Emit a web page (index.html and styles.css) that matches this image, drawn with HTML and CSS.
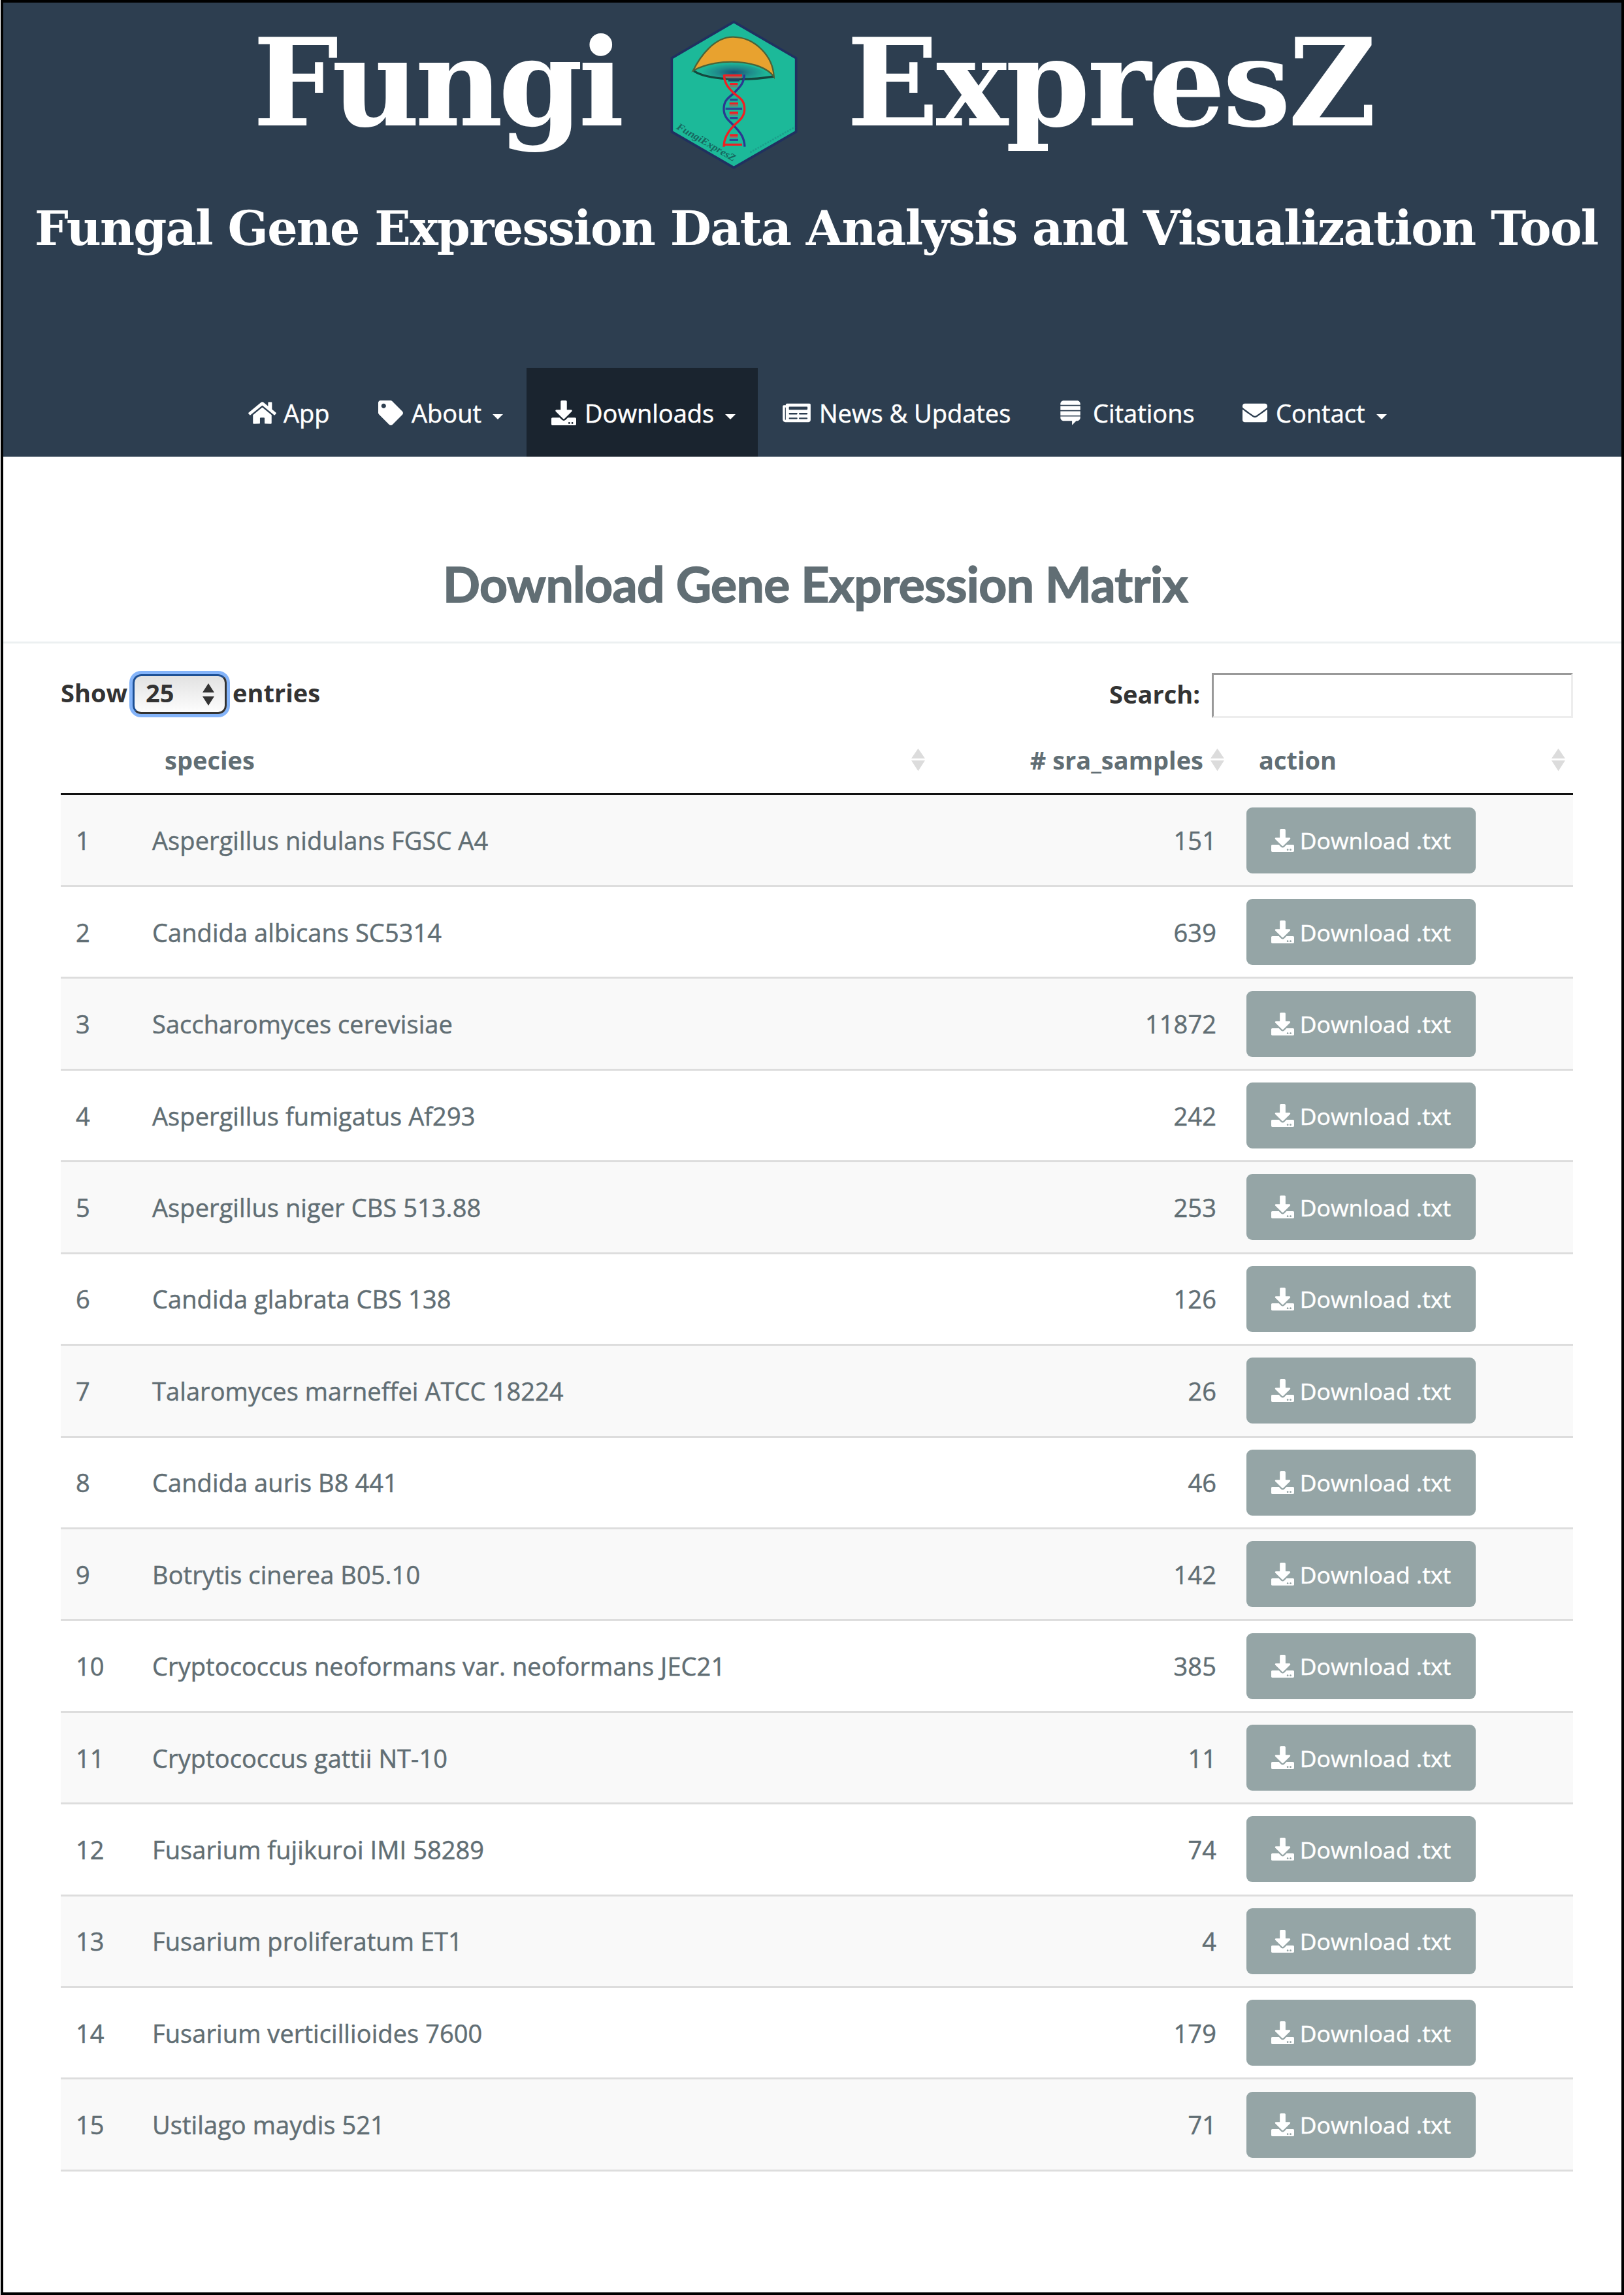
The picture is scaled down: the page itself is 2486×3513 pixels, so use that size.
FILE: index.html
```html
<!DOCTYPE html>
<html lang="en">
<head>
<meta charset="utf-8">
<title>FungiExpresZ</title>
<link rel="stylesheet" href="styles.css">
</head>
<body>
<svg width="0" height="0" class="defs">
  <symbol id="i-home" viewBox="0 0 576 512"><path d="M280.37 148.26L96 300.11V464a16 16 0 0 0 16 16l112.06-.29a16 16 0 0 0 15.92-16V368a16 16 0 0 1 16-16h64a16 16 0 0 1 16 16v95.64a16 16 0 0 0 16 16.05L464 480a16 16 0 0 0 16-16V300L295.67 148.26a12.19 12.19 0 0 0-15.3 0zM571.6 251.47L488 182.56V44.05a12 12 0 0 0-12-12h-56a12 12 0 0 0-12 12v72.61L318.47 43a48 48 0 0 0-61 0L4.34 251.47a12 12 0 0 0-1.6 16.9l25.5 31A12 12 0 0 0 45.15 301l235.22-193.74a12.19 12.19 0 0 1 15.3 0L530.9 301a12 12 0 0 0 16.9-1.6l25.5-31a12 12 0 0 0-1.7-16.93z"/></symbol>
  <symbol id="i-tag" viewBox="0 0 512 512"><path d="M0 252.118V48C0 21.49 21.49 0 48 0h204.118a48 48 0 0 1 33.941 14.059l211.882 211.882c18.745 18.745 18.745 49.137 0 67.882L293.823 497.941c-18.745 18.745-49.137 18.745-67.882 0L14.059 286.059A48 48 0 0 1 0 252.118zM112 64c-26.51 0-48 21.49-48 48s21.490 48 48 48 48-21.490 48-48-21.490-48-48-48z"/></symbol>
  <symbol id="i-download" viewBox="0 0 512 512"><path d="M216 0h80c13.300 0 24 10.700 24 24v168h87.700c17.800 0 26.700 21.500 14.100 34.100L269.700 378.300c-7.500 7.500-19.800 7.500-27.300 0L90.100 226.100c-12.600-12.600-3.700-34.100 14.100-34.100H192V24c0-13.300 10.700-24 24-24zm296 376v112c0 13.300-10.700 24-24 24H24c-13.300 0-24-10.700-24-24V376c0-13.300 10.700-24 24-24h146.700l49 49c20.100 20.100 52.500 20.100 72.600 0l49-49H488c13.300 0 24 10.700 24 24zm-124 88c0-11-9-20-20-20s-20 9-20 20 9 20 20 20 20-9 20-20zm64 0c0-11-9-20-20-20s-20 9-20 20 9 20 20 20 20-9 20-20z"/></symbol>
  <symbol id="i-news" viewBox="0 0 576 512"><path d="M552 64H88c-13.255 0-24 10.745-24 24v8H24c-13.255 0-24 10.745-24 24v272c0 30.928 25.072 56 56 56h472c26.510 0 48-21.490 48-48V88c0-13.255-10.745-24-24-24zM56 400a8 8 0 0 1-8-8V144h16v248a8 8 0 0 1-8 8zm236-16H140c-6.627 0-12-5.373-12-12v-8c0-6.627 5.373-12 12-12h152c6.627 0 12 5.373 12 12v8c0 6.627-5.373 12-12 12zm208 0H348c-6.627 0-12-5.373-12-12v-8c0-6.627 5.373-12 12-12h152c6.627 0 12 5.373 12 12v8c0 6.627-5.373 12-12 12zm-208-96H140c-6.627 0-12-5.373-12-12v-8c0-6.627 5.373-12 12-12h152c6.627 0 12 5.373 12 12v8c0 6.627-5.373 12-12 12zm208 0H348c-6.627 0-12-5.373-12-12v-8c0-6.627 5.373-12 12-12h152c6.627 0 12 5.373 12 12v8c0 6.627-5.373 12-12 12zm0-96H140c-6.627 0-12-5.373-12-12v-40c0-6.627 5.373-12 12-12h360c6.627 0 12 5.373 12 12v40c0 6.627-5.373 12-12 12z"/></symbol>
  <symbol id="i-stack" viewBox="0 0 448 512"><path d="M17.700 332.300h412.700v22c0 37.700-29.300 68-65.300 68h-19L259.300 512v-89.700H83c-36 0-65.300-30.300-65.300-68v-22zm0-23.600h412.700v-85H17.700v85zm0-109.400h412.700v-85H17.700v85zM365 0H83C47 0 17.700 30.300 17.700 67.700V90h412.700V67.700C430.300 30.300 401 0 365 0z"/></symbol>
  <symbol id="i-mail" viewBox="0 0 512 512"><path d="M502.300 190.800c3.900-3.100 9.700-.2 9.700 4.700V400c0 26.500-21.500 48-48 48H48c-26.500 0-48-21.500-48-48V195.600c0-5 5.700-7.800 9.700-4.700 22.400 17.400 52.100 39.500 154.100 113.600 21.100 15.400 56.700 47.800 92.200 47.600 35.700.3 72-32.800 92.300-47.600 102-74.100 131.600-96.300 154-113.700zM256 320c23.200.4 56.600-29.200 73.400-41.400 132.700-96.300 142.800-104.700 173.400-128.700 5.800-4.500 9.200-11.500 9.200-18.900v-19c0-26.500-21.500-48-48-48H48c-26.500 0-48 21.500-48 48v19c0 7.400 3.400 14.300 9.200 18.900 30.600 23.900 40.700 32.400 173.400 128.700 16.800 12.200 50.200 41.800 73.400 41.400z"/></symbol>
  <symbol id="i-sort" viewBox="0 0 22 36"><path d="M11 0L22 16H0zM0 19h22L11 36z"/></symbol>
</svg>
<div class="page">
  <header class="header">
    <div class="brand">
      <span class="word word-left">Fungi</span>
      <svg class="logo" viewBox="0 0 750 750">
        <defs>
          <radialGradient id="gill" gradientUnits="userSpaceOnUse" cx="0" cy="0" r="1" gradientTransform="translate(370 272) scale(150 42)">
            <stop offset="0" stop-color="#1d4f75"/><stop offset=".5" stop-color="#1f8a8b"/><stop offset="1" stop-color="#1eb597"/>
          </radialGradient>
        </defs>
        <path d="M370 40L656 207V545L370 710L85 545V207z" fill="#1cb999" stroke="#20305f" stroke-width="11"/>
        <path d="M186 266Q370 180 552 290Q450 306 340 302Q235 296 186 266z" fill="url(#gill)"/>
        <path d="M186 266Q235 297 340 302Q450 308 556 291" fill="none" stroke="#14483f" stroke-width="10"/>
        <path d="M183 264C215 200 280 108 368 110C470 112 550 200 554 292C500 215 300 200 183 264z" fill="#e8a22f" stroke="#4c6338" stroke-width="7"/>
        <g fill="none" stroke="#2b3990" stroke-width="10">
          <path d="M418 283C418 325 392 345 370 368C345 390 324 400 324 440C324 480 350 495 370 517C400 548 418 570 420 614"/>
          <path d="M352 398H388M332 439H408M352 482H388M350 583H390" stroke="#2b4a96"/>
        </g>
        <path d="M345 306H396" stroke="#1d4560" stroke-width="16"/>
        <path d="M352 337H388M350 426H390M350 466H390M352 569H388M332 295H406" stroke="#83796f" stroke-width="8"/>
        <g fill="none" stroke="#ee2024" stroke-width="10">
          <path d="M325 283C325 325 350 348 370 368C398 390 419 400 419 440C419 480 392 495 370 517C342 545 324 575 324 614"/>
          <path d="M325 286H408M352 326H388M350 415H390M350 457H390M352 561H388M326 604H408"/>
        </g>
        <path d="M445 640L650 524" stroke="#1c9f8c" stroke-width="8" stroke-dasharray="8 5"/>
        <text class="logo-text" transform="translate(104 530) rotate(30)" textLength="305" lengthAdjust="spacingAndGlyphs">FungiExpresZ</text>
      </svg>
      <span class="word word-right">ExpresZ</span>
    </div>
    <div class="tagline">Fungal Gene Expression Data Analysis and Visualization Tool</div>
    <nav class="nav">
      <a class="nav-item app"><svg class="ico wide"><use href="#i-home"/></svg><span>App</span></a>
      <a class="nav-item about"><svg class="ico"><use href="#i-tag"/></svg><span>About</span><i class="caret"></i></a>
      <a class="nav-item active"><svg class="ico"><use href="#i-download"/></svg><span>Downloads</span><i class="caret"></i></a>
      <a class="nav-item news"><svg class="ico wide"><use href="#i-news"/></svg><span>News &amp; Updates</span></a>
      <a class="nav-item cite"><svg class="ico narrow"><use href="#i-stack"/></svg><span>Citations</span></a>
      <a class="nav-item contact"><svg class="ico"><use href="#i-mail"/></svg><span>Contact</span><i class="caret"></i></a>
    </nav>
  </header>
  <h1 class="title">Download Gene Expression Matrix</h1>
  <main class="content">
    <div class="controls">
      <div class="length"><span>Show</span><div class="select"><span>25</span><svg class="arrows" viewBox="0 0 18 34"><path d="M9 0L18 14H0zM0 20h18L9 34z"/></svg></div><span>entries</span></div>
      <label class="search"><span>Search:</span><input class="search-input" type="text"></label>
    </div>
    <table class="table">
      <thead><tr class="row head"><th></th><th>species<svg class="sort"><use href="#i-sort"/></svg></th><th class="num"># sra_samples<svg class="sort"><use href="#i-sort"/></svg></th><th>action<svg class="sort"><use href="#i-sort"/></svg></th></tr></thead>
      <tbody>
        <tr class="row"><td>1</td><td>Aspergillus nidulans FGSC A4</td><td class="num">151</td><td><a class="btn"><svg class="ico"><use href="#i-download"/></svg><span>Download .txt</span></a></td></tr>
        <tr class="row"><td>2</td><td>Candida albicans SC5314</td><td class="num">639</td><td><a class="btn"><svg class="ico"><use href="#i-download"/></svg><span>Download .txt</span></a></td></tr>
        <tr class="row"><td>3</td><td>Saccharomyces cerevisiae</td><td class="num">11872</td><td><a class="btn"><svg class="ico"><use href="#i-download"/></svg><span>Download .txt</span></a></td></tr>
        <tr class="row"><td>4</td><td>Aspergillus fumigatus Af293</td><td class="num">242</td><td><a class="btn"><svg class="ico"><use href="#i-download"/></svg><span>Download .txt</span></a></td></tr>
        <tr class="row"><td>5</td><td>Aspergillus niger CBS 513.88</td><td class="num">253</td><td><a class="btn"><svg class="ico"><use href="#i-download"/></svg><span>Download .txt</span></a></td></tr>
        <tr class="row"><td>6</td><td>Candida glabrata CBS 138</td><td class="num">126</td><td><a class="btn"><svg class="ico"><use href="#i-download"/></svg><span>Download .txt</span></a></td></tr>
        <tr class="row"><td>7</td><td>Talaromyces marneffei ATCC 18224</td><td class="num">26</td><td><a class="btn"><svg class="ico"><use href="#i-download"/></svg><span>Download .txt</span></a></td></tr>
        <tr class="row"><td>8</td><td>Candida auris B8 441</td><td class="num">46</td><td><a class="btn"><svg class="ico"><use href="#i-download"/></svg><span>Download .txt</span></a></td></tr>
        <tr class="row"><td>9</td><td>Botrytis cinerea B05.10</td><td class="num">142</td><td><a class="btn"><svg class="ico"><use href="#i-download"/></svg><span>Download .txt</span></a></td></tr>
        <tr class="row"><td>10</td><td>Cryptococcus neoformans var. neoformans JEC21</td><td class="num">385</td><td><a class="btn"><svg class="ico"><use href="#i-download"/></svg><span>Download .txt</span></a></td></tr>
        <tr class="row"><td>11</td><td>Cryptococcus gattii NT-10</td><td class="num">11</td><td><a class="btn"><svg class="ico"><use href="#i-download"/></svg><span>Download .txt</span></a></td></tr>
        <tr class="row"><td>12</td><td>Fusarium fujikuroi IMI 58289</td><td class="num">74</td><td><a class="btn"><svg class="ico"><use href="#i-download"/></svg><span>Download .txt</span></a></td></tr>
        <tr class="row"><td>13</td><td>Fusarium proliferatum ET1</td><td class="num">4</td><td><a class="btn"><svg class="ico"><use href="#i-download"/></svg><span>Download .txt</span></a></td></tr>
        <tr class="row"><td>14</td><td>Fusarium verticillioides 7600</td><td class="num">179</td><td><a class="btn"><svg class="ico"><use href="#i-download"/></svg><span>Download .txt</span></a></td></tr>
        <tr class="row"><td>15</td><td>Ustilago maydis 521</td><td class="num">71</td><td><a class="btn"><svg class="ico"><use href="#i-download"/></svg><span>Download .txt</span></a></td></tr>
      </tbody>
    </table>
  </main>
</div>
</body>
</html>
```
FILE: styles.css
```css
* { box-sizing: border-box; }
body {
  margin: 0;
  background: #fff;
  font-family: "Open Sans", sans-serif;
  font-size: 38px;
  line-height: 54px;
  color: #616e74;
}
.defs { display: block; position: absolute; }
.page {
  height: 3513px;
  margin-left: 1px;
  border: 4px solid #000;
}
.header {
  display: flex;
  flex-direction: column;
  height: 695px;
  background: #2d3e50;
  color: #fff;
}
.brand {
  display: flex;
  align-items: flex-start;
  height: 266px;
  padding-top: 16px;
}
.word {
  font: bold 185px/185px "DejaVu Serif", serif;
  padding-top: 15px;
  white-space: nowrap;
}
.word-left { width: 995px; padding-left: 382px; letter-spacing: -7px; }
.word-right { padding-left: 46px; letter-spacing: -4px; }
.logo { flex: none; width: 250px; height: 250px; }
.logo-text { font: bold italic 46px "Liberation Serif", serif; fill: #17675f; }
.tagline {
  margin-top: 43px;
  padding-left: 48px;
  font: bold 73px/73px "DejaVu Serif", serif;
  letter-spacing: -1.8px;
  white-space: nowrap;
}
.nav {
  display: flex;
  height: 136px;
  margin-top: auto;
  padding-left: 338px;
  -webkit-text-stroke: .5px currentColor;
}
.nav-item {
  display: flex;
  align-items: center;
  gap: 13px;
  padding: 2px 0 0 38px;
  white-space: nowrap;
}
.app { width: 198px; gap: 11px; padding-left: 37px; }
.about { width: 265px; }
.active { width: 354px; background: #1a242f; }
.news { width: 421px; }
.cite { width: 283px; }
.ico { flex: none; width: 38px; height: 38px; fill: currentColor; }
.ico.wide { width: 43px; }
.ico.narrow { width: 33px; margin-right: 5px; margin-left: 3px; }
.caret {
  margin: 11px 0 0 4px;
  border: 8px solid transparent;
  border-top-color: #fff;
  border-bottom: 0;
}
.title {
  margin: 0;
  height: 286px;
  padding: 149px 0 0 9px;
  border-bottom: 3px solid #ecf0f1;
  font: bold 75px/90px Lato, sans-serif;
  letter-spacing: -.6px;
  -webkit-text-stroke: 1.5px currentColor;
  text-align: center;
}
.content { padding: 41px 74px 0 88px; }
.controls {
  display: flex;
  justify-content: space-between;
  height: 102px;
  font-weight: bold;
  color: #333;
}
.length, .search { display: flex; align-items: center; height: 73px; }
.length > span, .select > span { margin-top: -5px; }
.search > span { margin-top: -2px; }
.select {
  display: flex;
  align-items: center;
  justify-content: space-between;
  width: 144px;
  height: 61px;
  margin: 0 9px 0 8px;
  padding: 0 16px 0 17px;
  border: 3px solid #333;
  border-top-color: #1c4f95;
  border-left-color: #1c4f95;
  border-radius: 13px;
  box-shadow: 0 0 0 5px #84b4fa;
  background: linear-gradient(#e2e2e2, #fdfdfd);
}
.arrows { width: 18px; height: 34px; fill: #333; }
.search-input {
  width: 553px;
  height: 69px;
  margin: 4px 0 0 18px;
  border: 3px solid #ededed;
  border-top-color: #999;
  border-left-color: #999;
  background: #fff;
}
.table { display: block; }
thead, tbody { display: block; }
.row {
  display: grid;
  grid-template-columns: 117px 1217px 458px 522px;
  height: 140.43px;
  border-bottom: 3px solid #ddd;
  align-items: center;
}
.head { height: 89px; align-items: start; border-bottom: 3px solid #111; }
tbody .row:nth-child(odd) { background: #f9f9f9; }
tbody .row:first-child { height: 141px; }
td {
  padding: 0 23px;
  letter-spacing: .08px;
  -webkit-text-stroke: .5px currentColor;
}
th { display: flex; align-items: center; height: 70px; padding: 0 11px 0 42px; text-align: left; }
th.num { justify-content: flex-end; }
th .sort { margin-left: auto; }
th.num .sort { margin-left: 11px; }
.num { text-align: right; }
.sort { flex: none; width: 21px; height: 36px; fill: #dcdcdc; }
.btn {
  display: flex;
  align-items: center;
  justify-content: center;
  gap: 9px;
  width: 351px;
  height: 101px;
  border-radius: 9px;
  background: #95a5a6;
  color: #fff;
  font-size: 35.5px;
  white-space: nowrap;
}
.btn .ico { width: 35px; height: 35px; }
```
